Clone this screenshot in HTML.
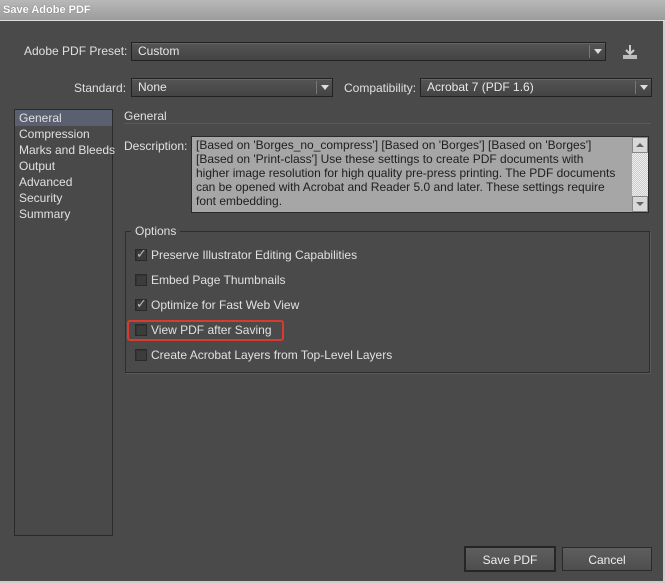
<!DOCTYPE html>
<html><head><meta charset="utf-8"><style>
*{box-sizing:border-box;margin:0;padding:0}
body{width:665px;height:583px;background:#4a4a4a;font-family:"Liberation Sans","DejaVu Sans",sans-serif;font-size:12px;color:#e0e0e0;position:relative;overflow:hidden}
.a{position:absolute;white-space:nowrap}
.title{left:0;top:0;width:665px;height:21px;background:linear-gradient(#b8b8b8,#9c9c9c);border-bottom:1px solid #ddd;color:#fff;font-weight:bold;font-size:11px;padding:4px 0 0 3px;text-shadow:0 0 1px #555}
.sel{background:linear-gradient(#555,#444);border:1px solid #222;box-shadow:inset 0 1px 0 #666;padding:1px 0 0 6px;color:#e8e8e8}
.sel .ar{position:absolute;right:0;top:2px;width:16px;height:13px;border-left:1px solid #777}
.sel .ar:after{content:"";position:absolute;left:4px;top:4px;border-left:4px solid transparent;border-right:4px solid transparent;border-top:5px solid #ddd}
.cb{width:12px;height:12px;background:#3c3c3c;border:1px solid #2a2a2a;box-shadow:inset 1px 1px 0 #333}
.btn{border:1px solid #2a2a2a;background:linear-gradient(#5e5e5e,#4e4e4e);text-align:center;padding-top:5px;color:#eee;font-size:12px}
</style></head><body>
<div class="a title">Save Adobe PDF</div>
<div class="a" style="right:0;top:21px;width:2px;height:562px;background:#ccc"></div>
<div class="a" style="left:0;bottom:0;width:665px;height:2px;background:#ccc"></div>

<div class="a" style="left:24px;top:44px">Adobe PDF Preset:</div>
<div class="a sel" style="left:131px;top:42px;width:475px;height:19px">Custom<span class="ar"></span></div>
<svg class="a" style="left:621px;top:44px" width="18" height="16"><path d="M9 1v8M5 6l4 4 4-4" stroke="#ccc" stroke-width="2" fill="none"/><rect x="2" y="11" width="14" height="4" fill="#bbb"/></svg>

<div class="a" style="left:74px;top:81px">Standard:</div>
<div class="a sel" style="left:131px;top:78px;width:202px;height:19px">None<span class="ar"></span></div>
<div class="a" style="left:344px;top:81px">Compatibility:</div>
<div class="a sel" style="left:420px;top:78px;width:232px;height:19px">Acrobat 7 (PDF 1.6)<span class="ar"></span></div>

<div class="a" style="left:14px;top:109px;width:99px;height:427px;border:1px solid #2a2a2a;background:#494949"></div>
<div class="a" style="left:15px;top:110px;width:97px;height:16px;background:#5a6070"></div>
<div class="a" style="left:19px;top:110px;line-height:16px">General<br>Compression<br>Marks and Bleeds<br>Output<br>Advanced<br>Security<br>Summary</div>

<div class="a" style="left:124px;top:109px">General</div>
<div class="a" style="left:124px;top:123px;width:527px;height:1px;background:#2e2e2e;border-bottom:1px solid #5a5a5a"></div>

<div class="a" style="left:124px;top:139px">Description:</div>
<div class="a" style="left:191px;top:136px;width:458px;height:77px;border:1px solid #2a2a2a;background:#a6a6a6"></div>
<div class="a" style="left:196px;top:138px;color:#1e1e1e;line-height:14px">[Based on 'Borges_no_compress'] [Based on 'Borges'] [Based on 'Borges']<br>[Based on 'Print-class'] Use these settings to create PDF documents with<br>higher image resolution for high quality pre-press printing. The PDF documents<br>can be opened with Acrobat and Reader 5.0 and later. These settings require<br>font embedding.</div>
<div class="a" style="left:632px;top:137px;width:16px;height:75px;background:#ddd repeating-conic-gradient(#eee 0 25%,#ccc 0 50%) 0 0/2px 2px"></div>
<div class="a" style="left:632px;top:137px;width:16px;height:16px;background:#d8d8d8;border:1px solid #888"><div style="margin:5px 0 0 3px;width:0;border-left:4px solid transparent;border-right:4px solid transparent;border-bottom:4px solid #666"></div></div>
<div class="a" style="left:632px;top:196px;width:16px;height:16px;background:#d8d8d8;border:1px solid #888"><div style="margin:5px 0 0 3px;width:0;border-left:4px solid transparent;border-right:4px solid transparent;border-top:4px solid #666"></div></div>

<div class="a" style="left:125px;top:231px;width:525px;height:142px;border:1px solid #2e2e2e;box-shadow:1px 1px 0 #5a5a5a"></div>
<div class="a" style="left:131px;top:224px;background:#4a4a4a;padding:0 4px">Options</div>

<div class="a cb" style="left:135px;top:249px"></div><div class="a" style="left:136px;top:246px;color:#bbb;font-size:13px">✓</div><div class="a" style="left:151px;top:248px">Preserve Illustrator Editing Capabilities</div>
<div class="a cb" style="left:135px;top:274px"></div><div class="a" style="left:151px;top:273px">Embed Page Thumbnails</div>
<div class="a cb" style="left:135px;top:299px"></div><div class="a" style="left:136px;top:296px;color:#bbb;font-size:13px">✓</div><div class="a" style="left:151px;top:298px">Optimize for Fast Web View</div>
<div class="a cb" style="left:135px;top:324px"></div><div class="a" style="left:151px;top:323px">View PDF after Saving</div>
<div class="a" style="left:127px;top:320px;width:157px;height:21px;border:2px solid #d83a2e;border-radius:3px"></div>
<div class="a cb" style="left:135px;top:349px"></div><div class="a" style="left:151px;top:348px">Create Acrobat Layers from Top-Level Layers</div>

<div class="a btn" style="left:464px;top:546px;width:92px;height:26px;border:2px solid #262626">Save PDF</div>
<div class="a btn" style="left:562px;top:547px;width:90px;height:24px">Cancel</div>
</body></html>
